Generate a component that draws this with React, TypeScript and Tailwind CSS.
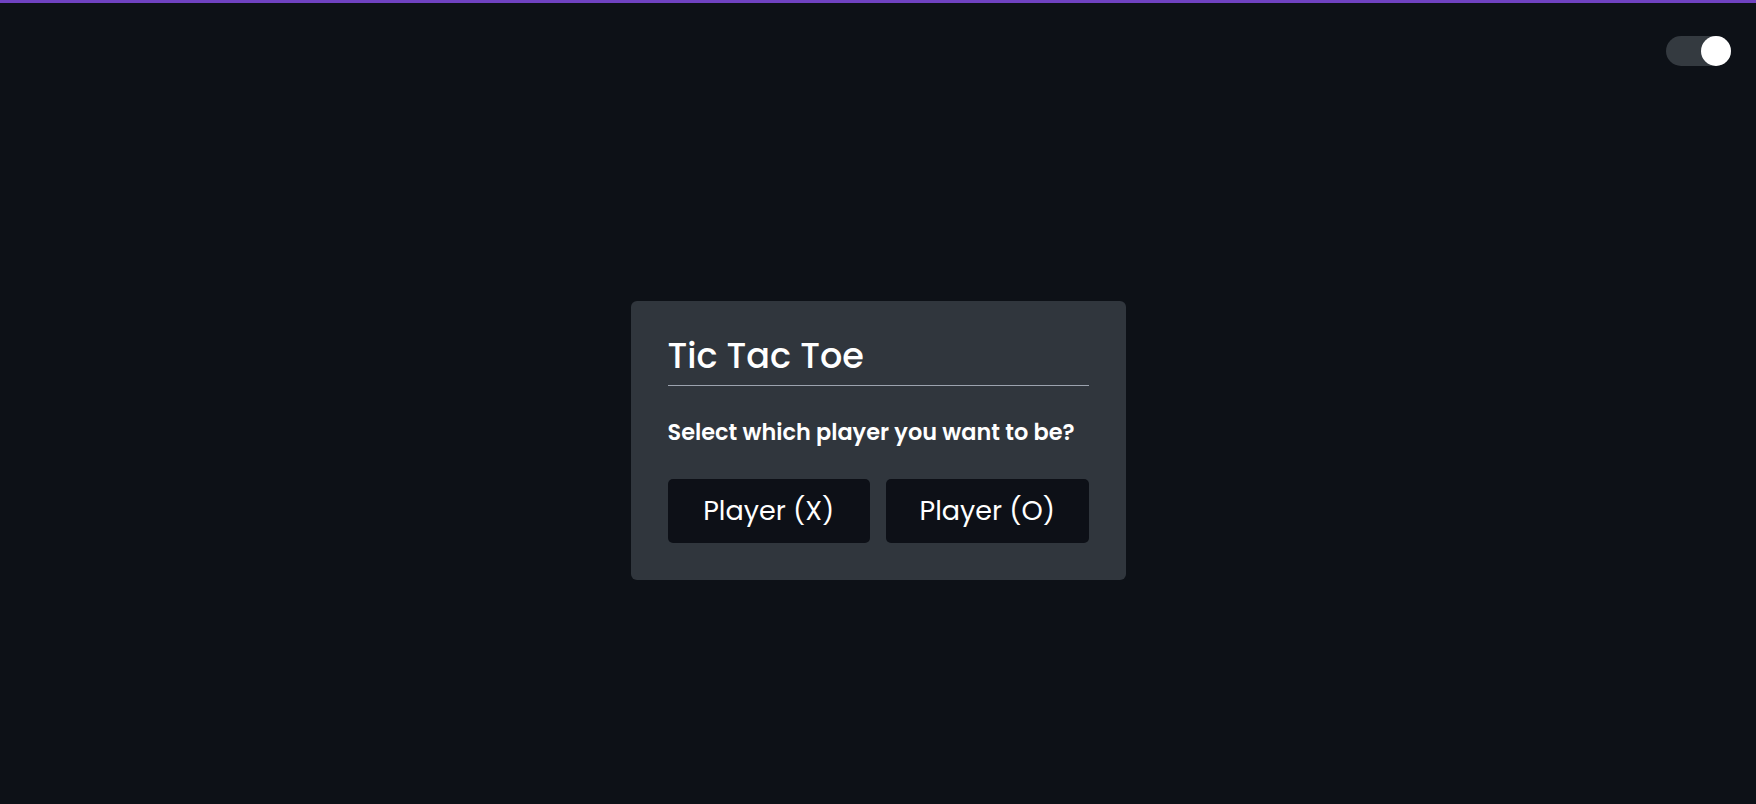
import { useState } from 'react';

export default function App() {
  const [dark, setDark] = useState(true);

  return (
    <div className="min-h-screen flex flex-col bg-[#0d1117] text-white font-['Poppins','Inter',sans-serif]">
      {/* accent strip */}
      <div className="h-[3px] bg-[#6f42c1]" />

      <header className="h-[74px] flex justify-end pt-[33px] pr-[25px]">
        <button
          onClick={() => setDark(!dark)}
          className={`w-[65px] h-[30px] rounded-full bg-[#343a40] flex items-center ${dark ? 'justify-end' : 'justify-start'}`}
        >
          <span className="w-[30px] h-[30px] rounded-full bg-white" />
        </button>
      </header>

      <main className="flex-1 flex items-center justify-center">
        <div className="w-[495px] h-[279px] rounded-[6px] bg-[#30363d] px-[37px] pt-[28px]">
          <h1 className="text-[35px] font-medium leading-[53px] pb-[3px] border-b border-[#9ca3af]">
            Tic Tac Toe
          </h1>
          <p className="mt-[30px] text-[22.4px] font-semibold leading-[33px]">
            Select which player you want to be?
          </p>
          <div className="mt-[30px] grid grid-cols-2 gap-[16px]">
            <button className="h-[64px] rounded-[5px] bg-[#0d1017] text-[27px]">
              Player (X)
            </button>
            <button className="h-[64px] rounded-[5px] bg-[#0d1017] text-[27px]">
              Player (O)
            </button>
          </div>
        </div>
      </main>
    </div>
  );
}
